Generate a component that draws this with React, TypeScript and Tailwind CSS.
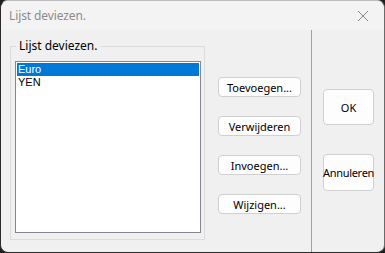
import React from "react";

function Btn({ label, className }: { label: string; className: string }) {
  return (
    <div
      className={
        "flex items-center justify-center rounded-[4px] border border-[#d0d0d0] bg-[#fdfdfd] text-[11px] leading-none text-black whitespace-nowrap " +
        className
      }
    >
      {label}
    </div>
  );
}

export default function App() {
  return (
    <div
      className="w-[385px] h-[253px] bg-[#1f1f1f]"
      style={{ fontFamily: '"Noto Sans", "Open Sans", sans-serif' }}
    >
      <div className="w-[385px] h-[253px] flex flex-col rounded-[8px] overflow-hidden border-l border-b border-[#2a2a2a] border-t-[#bdbdbd] border-t border-r border-r-[#6a6a6a] bg-[#f0f0f0]">
        <div className="h-[29px] shrink-0 flex items-center justify-between bg-[#f3f3f3] pl-[8px] pr-[15px]">
          <span className="text-[12px] text-[#8c8c8c] tracking-[-0.1px]">Lijst deviezen.</span>
          <svg width="12" height="12" viewBox="0 0 12 12" className="shrink-0">
            <path d="M1 1 L11 11 M11 1 L1 11" stroke="#8a8a8a" strokeWidth="1" />
          </svg>
        </div>
        <div className="flex flex-row flex-1 pl-[9px]">
          <div className="relative mt-[16px] w-[195px] h-[194px] border border-[#dcdcdc] pl-[4px] pt-[14px] pr-[3px] pb-[6px] shrink-0">
            <span className="absolute left-[5px] top-[-9px] bg-[#f0f0f0] px-[3px] text-[12px] leading-[16px] text-black">
              Lijst deviezen.
            </span>
            <div
              className="w-[186px] h-[172px] border border-[#828790] bg-white p-px"
              style={{ fontFamily: '"Liberation Sans", Arial, sans-serif' }}
            >
              <div className="h-[13px] bg-[#0078d7] text-white text-[11px] leading-[13px] pl-px">
                Euro
              </div>
              <div className="h-[13px] text-black text-[11px] leading-[13px] pl-px">
                YEN
              </div>
            </div>
          </div>
          <div className="ml-[13px] mt-[47px] flex flex-col gap-[19px] shrink-0">
            <Btn label="Toevoegen..." className="w-[83px] h-[20px]" />
            <Btn label="Verwijderen" className="w-[83px] h-[20px]" />
            <Btn label="Invoegen..." className="w-[83px] h-[20px]" />
            <Btn label="Wijzigen..." className="w-[83px] h-[20px]" />
          </div>
          <div className="ml-[10px] w-px bg-[#a0a0a0] shrink-0" />
          <div className="ml-[11px] mt-[59px] flex flex-col gap-[29px] shrink-0">
            <Btn label="OK" className="w-[51px] h-[36px]" />
            <Btn label="Annuleren" className="w-[51px] h-[37px] tracking-[-0.3px]" />
          </div>
        </div>
      </div>
    </div>
  );
}
